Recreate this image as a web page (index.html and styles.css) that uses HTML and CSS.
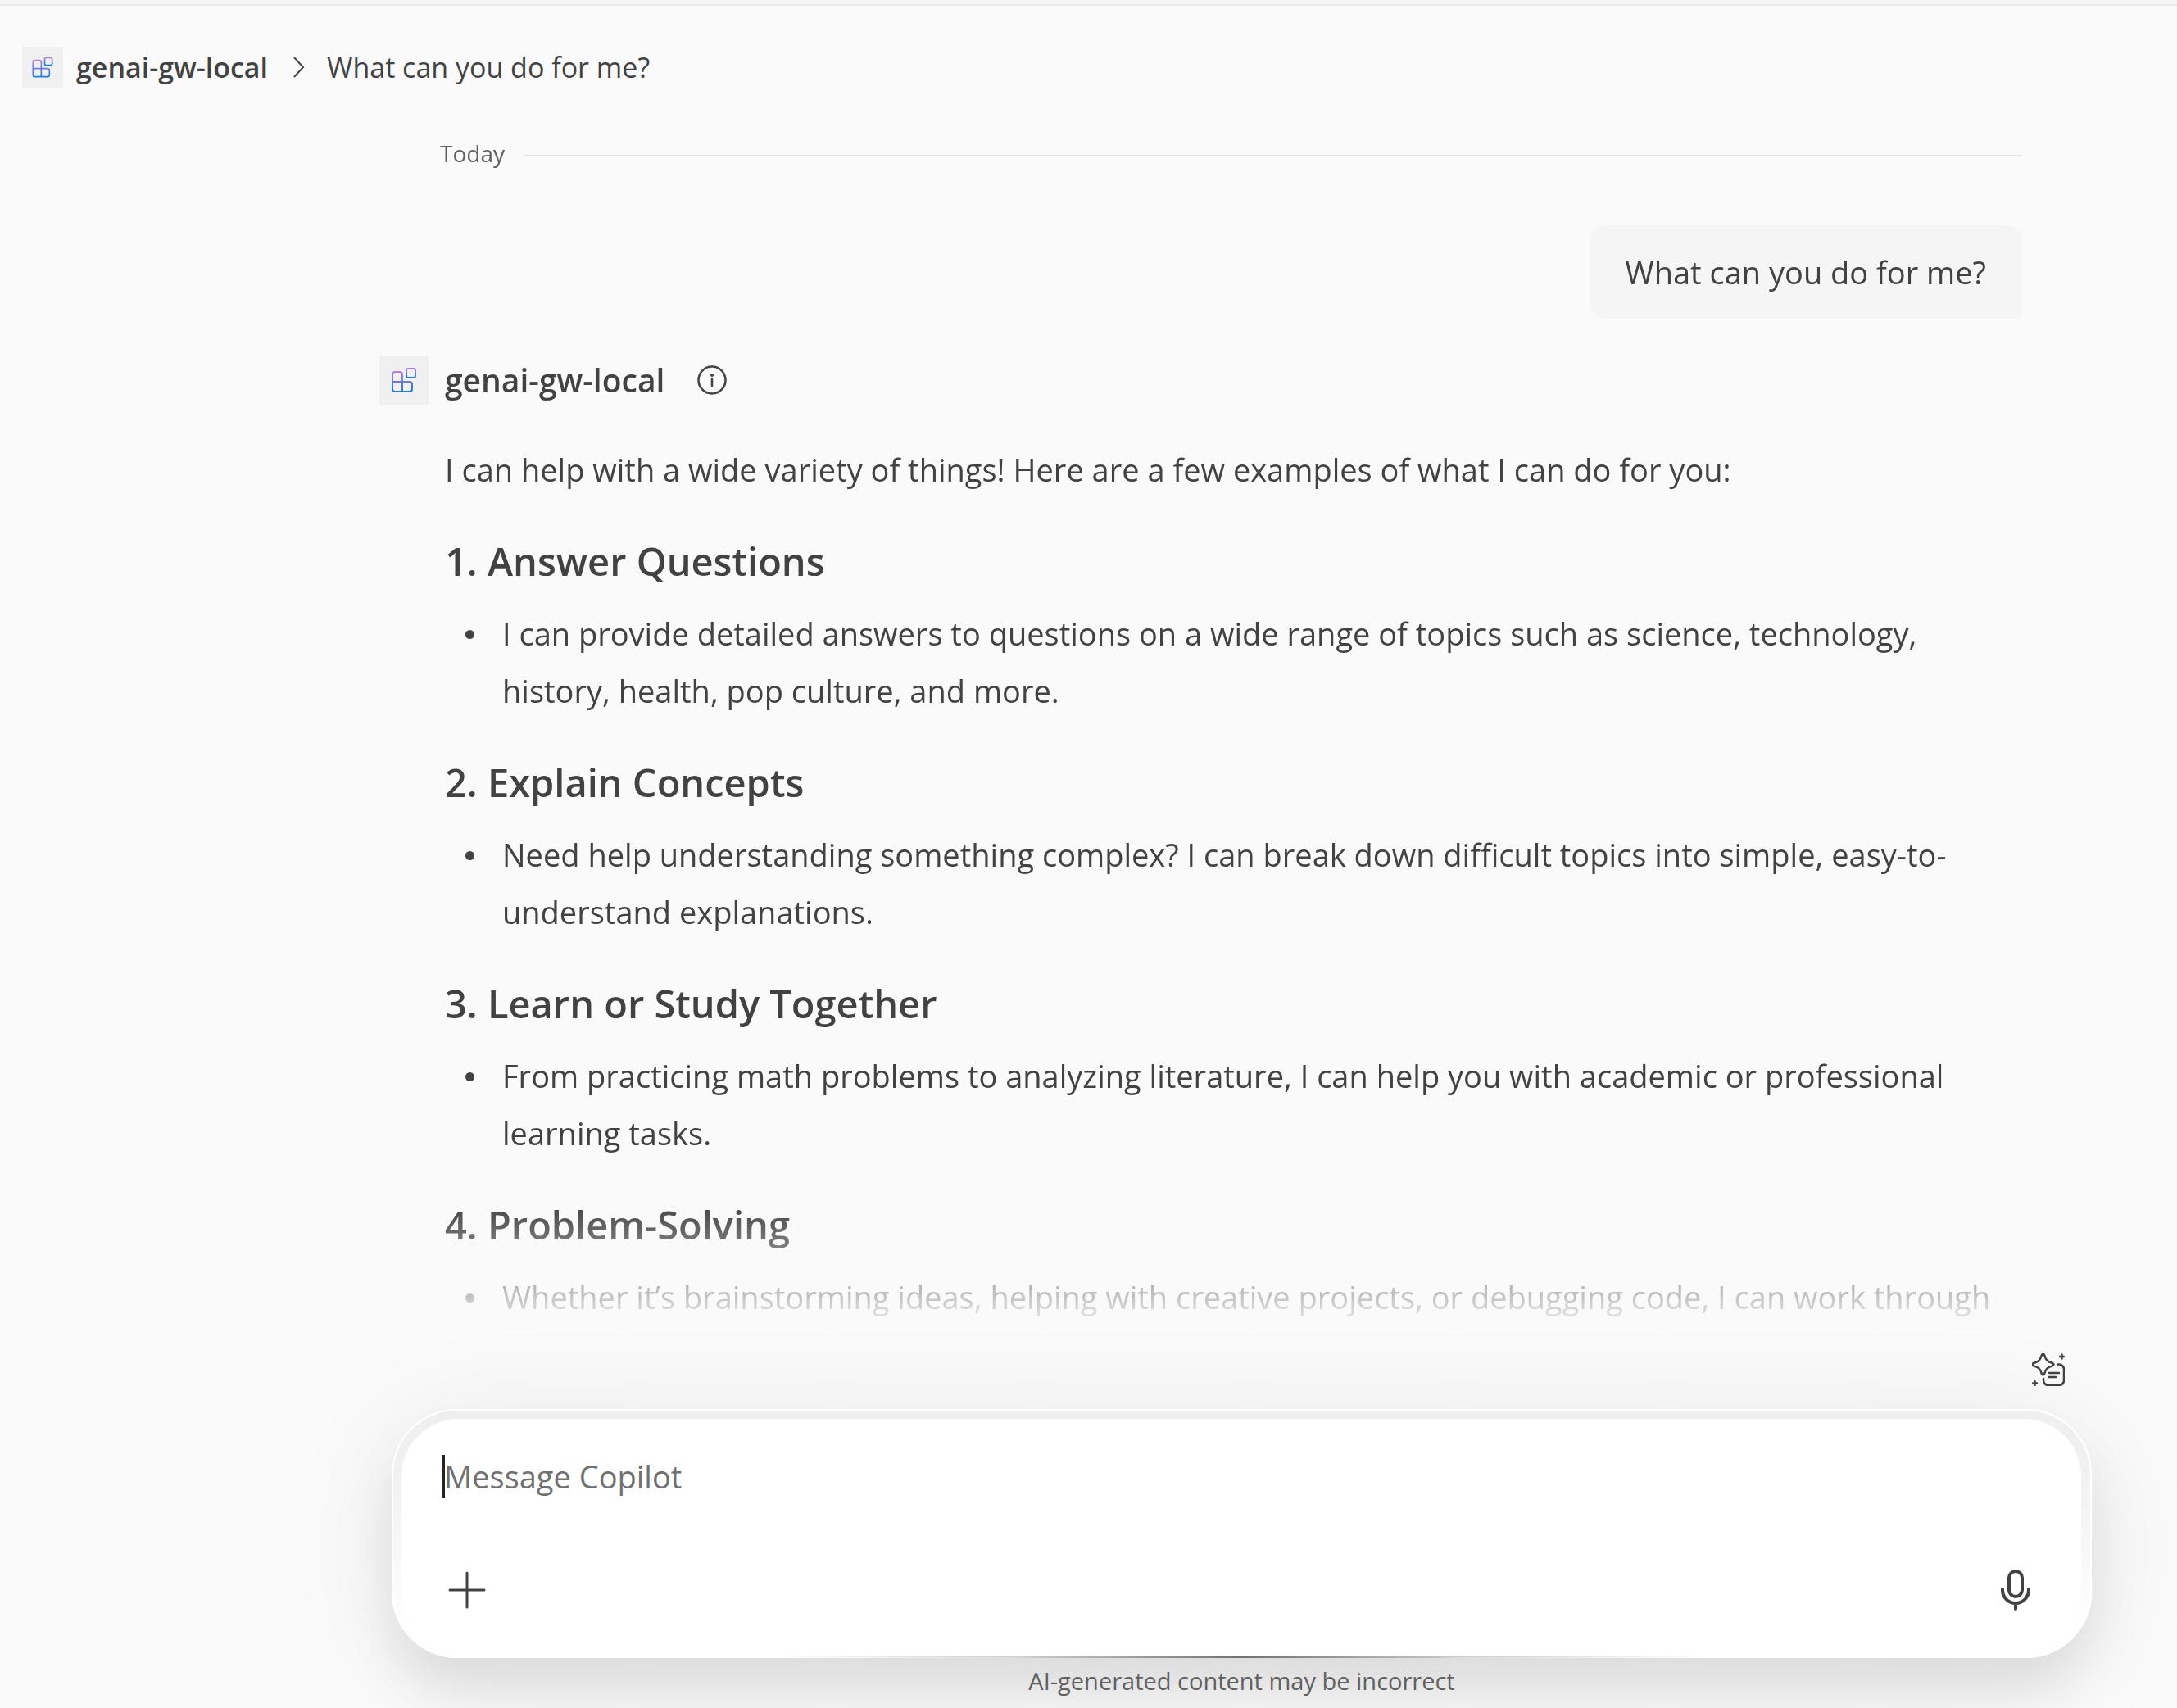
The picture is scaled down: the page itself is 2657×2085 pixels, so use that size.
FILE: index.html
```html
<!DOCTYPE html>
<html lang="en">
<head>
<meta charset="utf-8">
<meta name="viewport" content="width=device-width, initial-scale=1">
<title>genai-gw-local</title>
<link rel="stylesheet" href="styles.css">
</head>
<body>
<svg class="defs" aria-hidden="true">
  <defs>
    <linearGradient id="tile" x1="0" y1="0" x2="0" y2="1">
      <stop offset="0" stop-color="#b07fe0"/>
      <stop offset="1" stop-color="#1f7ad8"/>
    </linearGradient>
    <symbol id="agent" viewBox="0 0 60 60">
      <g fill="none" stroke="url(#tile)" stroke-width="2">
        <path d="M16 32V23a3 3 0 0 1 3-3h6a3 3 0 0 1 3 3v9h9a3 3 0 0 1 3 3v6a3 3 0 0 1-3 3H19a3 3 0 0 1-3-3zh12v12"/>
        <rect x="33" y="16" width="11" height="11" rx="2"/>
      </g>
    </symbol>
  </defs>
</svg>
<div class="app">
  <header class="topbar">
    <nav class="crumbs" aria-label="Breadcrumb">
      <svg class="avatar avatar-small" aria-hidden="true"><use href="#agent"/></svg>
      <a class="crumb-agent" href="#">genai-gw-local</a>
      <svg class="chevron" viewBox="0 0 16 28" aria-hidden="true"><path d="M2 2l11 12L2 26"/></svg>
      <span>What can you do for me?</span>
    </nav>
  </header>

  <main class="chat">
    <div class="day"><span>Today</span></div>
    <div class="bubble">What can you do for me?</div>
    <article class="reply">
      <div class="reply-head">
        <svg class="avatar" aria-hidden="true"><use href="#agent"/></svg>
        <strong class="reply-name">genai-gw-local</strong>
        <button class="icon-button" type="button" aria-label="About this agent">
          <svg class="info" viewBox="0 0 36 36" aria-hidden="true">
            <circle cx="18" cy="18" r="16.500" fill="none" stroke="currentColor" stroke-width="2.500"/>
            <circle cx="18" cy="12" r="2" fill="currentColor"/>
            <path d="M18 17v8" stroke="currentColor" stroke-width="2.500" stroke-linecap="round"/>
          </svg>
        </button>
      </div>
      <div class="reply-body">
        <p>I can help with a wide variety of things! Here are a few examples of what I can do for you:</p>
        <h3>1. Answer Questions</h3>
        <ul><li>I can provide detailed answers to questions on a wide range of topics such as science, technology, history, health, pop culture, and more.</li></ul>
        <h3>2. Explain Concepts</h3>
        <ul><li>Need help understanding something complex? I can break down difficult topics into simple, easy-to-understand explanations.</li></ul>
        <h3>3. Learn or Study Together</h3>
        <ul><li>From practicing math problems to analyzing literature, I can help you with academic or professional learning tasks.</li></ul>
        <h3>4. Problem-Solving</h3>
        <ul><li>Whether it’s brainstorming ideas, helping with creative projects, or debugging code, I can work through</li></ul>
      </div>
    </article>
  </main>

  <footer class="dock">
    <div class="tools">
      <button class="icon-button" type="button" aria-label="Prompt gallery">
        <svg class="prompts" viewBox="0 0 40 40" fill="none" stroke="currentColor" stroke-width="2.500" stroke-linecap="round" stroke-linejoin="round" aria-hidden="true">
          <path d="M13.500 1c1 0 1.500.6 1.800 1.500 1.500 5.500 3.500 7.600 9 9.300 3 .9 3 2.900 0 3.800-5.500 1.700-7.500 3.600-9 9-.6 2.500-3 2.500-3.600 0-1.500-5.400-3.500-7.300-9-9-3-.9-3-2.900 0-3.800 5.500-1.700 7.500-3.800 9-9.300C12 1.600 12.500 1 13.500 1z"/>
          <path d="M31 13.500h2a6 6 0 0 1 6 6V33a6 6 0 0 1-6 6H20a6 6 0 0 1-6-6v-2M21 24h12M21 29h8"/>
          <path d="M36.500 1.500v5M34 4h5M3.500 34v5M1 36.500h5"/>
        </svg>
      </button>
    </div>
    <form class="composer">
      <div class="composer-inner">
        <div class="field">
          <textarea class="message" rows="1" placeholder="Message Copilot" aria-label="Message Copilot"></textarea>
          <span class="caret"></span>
        </div>
        <div class="actions">
          <button class="icon-button" type="button" aria-label="Add content">
            <svg class="plus" viewBox="0 0 46 46" aria-hidden="true"><path d="M23 2v42M2 23h42"/></svg>
          </button>
          <button class="icon-button" type="button" aria-label="Dictate">
            <svg class="mic" viewBox="0 0 36 50" aria-hidden="true"><rect x="10" y="2" width="16" height="31" rx="8"/><path d="M2 24v1a16 16 0 0 0 32 0v-1M18 41v7"/></svg>
          </button>
        </div>
      </div>
      <span class="accent"></span>
    </form>
    <p class="notice">AI-generated content may be incorrect</p>
  </footer>
</div>
</body>
</html>
```
FILE: styles.css
```css
* { box-sizing: border-box; }

body {
  margin: 0;
  background: #fafafa;
  color: #424242;
  font-family: "Open Sans", "Noto Sans", sans-serif;
}

.defs { position: absolute; width: 0; height: 0; }

.app {
  display: flex;
  flex-direction: column;
  height: 100vh;
  overflow: hidden;
  border-top: 5px solid #f5f5f5;
}

.topbar {
  padding: 50px 27px 0;
  border-top: 2px solid #ebebeb;
}

.crumbs {
  display: flex;
  align-items: center;
  height: 50px;
  font-size: 34px;
  line-height: 50px;
}

.crumb-agent {
  margin: 0 30px 0 16px;
  color: inherit;
  font-weight: 600;
  text-decoration: none;
}

.chevron {
  width: 16px;
  height: 28px;
  margin-right: 26px;
  fill: none;
  stroke: currentColor;
  stroke-width: 2;
}

.avatar {
  flex: none;
  width: 60px;
  height: 60px;
  background: #f0f0f0;
}

.avatar-small { width: 50px; height: 50px; }

.icon-button {
  display: flex;
  padding: 0;
  border: 0;
  background: none;
  color: inherit;
}

.chat {
  flex: 1;
  min-height: 0;
  overflow: hidden;
  display: flex;
  flex-direction: column;
  padding: 58px 189px 0 463px;
  -webkit-mask-image: linear-gradient(to top, transparent, #000 160px);
  mask-image: linear-gradient(to top, transparent, #000 160px);
}

.day {
  display: flex;
  align-items: center;
  gap: 24px;
  padding-left: 74px;
  color: #616161;
  font-size: 28px;
  line-height: 44px;
}

.day::after {
  content: "";
  flex: 1;
  height: 2px;
  margin-top: 6px;
  background: #e0e0e0;
}

.bubble {
  align-self: flex-end;
  margin-top: 66px;
  padding: 22px 44px;
  border-radius: 20px 20px 6px 20px;
  background: #f5f5f5;
  font-size: 38px;
  line-height: 70px;
}

.reply { margin-top: 45px; }

.reply-head {
  display: flex;
  align-items: center;
  height: 60px;
}

.reply-name {
  margin: 0 40px 0 20px;
  font-size: 39px;
  font-weight: 600;
  line-height: 60px;
}

.info { width: 36px; height: 36px; }

.reply-body {
  padding: 44px 0 0 80px;
  font-size: 38px;
  line-height: 70px;
}

.reply-body p,
.reply-body ul { margin: 0; }

.reply-body h3 {
  margin: 43px 0 19px;
  font-size: 47px;
  font-weight: 600;
  line-height: 68px;
}

.reply-body ul {
  padding: 0;
  list-style: none;
}

.reply-body li {
  display: flex;
}

.reply-body li::before {
  content: "";
  flex: none;
  width: 11px;
  height: 11px;
  margin: 31px 34px 0 25px;
  border-radius: 50%;
  background: currentColor;
}

.dock {
  flex: none;
  display: flex;
  flex-direction: column;
  padding: 22px 104px 13px 478px;
}

.tools {
  display: flex;
  justify-content: flex-end;
  padding: 0 33px 28px;
}

.prompts { width: 40px; height: 40px; }

.composer {
  position: relative;
  padding: 10px 11px 10px 10px;
  border: 2px solid #fff;
  border-radius: 80px;
  background: linear-gradient(#efefef, #f1f1f1 25%, #fff 90%);
  box-shadow: 0 40px 60px rgba(0, 0, 0, .08), 0 20px 140px rgba(0, 0, 0, .08);
}

.composer-inner {
  display: flex;
  flex-direction: column;
  gap: 82px;
  padding: 38px 62px 46px 52px;
  border-radius: 70px;
  background: #fff;
}

.field { position: relative; }

.message {
  display: block;
  width: 100%;
  height: 64px;
  padding: 0;
  border: 0;
  outline: 0;
  resize: none;
  overflow: hidden;
  background: none;
  color: #424242;
  font: 38px/64px "Open Sans", "Noto Sans", sans-serif;
}

.message::placeholder { color: #707070; opacity: 1; }

.caret {
  position: absolute;
  top: 6px;
  left: -2px;
  width: 3px;
  height: 53px;
  background: #242424;
}

.actions {
  display: flex;
  align-items: center;
  justify-content: space-between;
}

.plus, .mic {
  fill: none;
  stroke: currentColor;
  stroke-linecap: round;
}

.plus { width: 46px; height: 46px; margin-left: 5px; stroke-width: 3; }

.mic { width: 36px; height: 50px; stroke-width: 4; }

.accent {
  position: absolute;
  right: 0;
  bottom: -2px;
  left: 0;
  height: 3px;
  background: linear-gradient(to right, rgba(96, 96, 96, 0) 22%, rgba(96, 96, 96, .3) 37%, #707070 50%, rgba(96, 96, 96, .3) 63%, rgba(96, 96, 96, 0) 78%);
  clip-path: ellipse(30% 50%);
}

.notice {
  margin: 8px 0 0;
  color: #616161;
  font-size: 29px;
  line-height: 40px;
  text-align: center;
  position: relative;
}
```
